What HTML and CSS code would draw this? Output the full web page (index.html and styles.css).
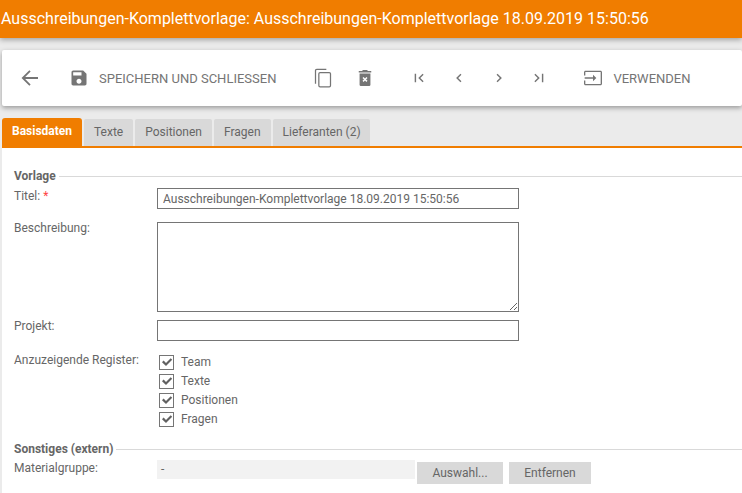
FILE: index.html
```html
<!DOCTYPE html>
<html lang="de">
<head>
<meta charset="utf-8">
<title>Ausschreibungen-Komplettvorlage</title>
<link rel="stylesheet" href="styles.css">
</head>
<body>
<header class="titlebar">Ausschreibungen-Komplettvorlage: Ausschreibungen-Komplettvorlage 18.09.2019 15:50:56</header>
<div class="toolbar">
  <button class="tool back" aria-label="Zurück"><svg viewBox="0 0 24 24" width="24" height="24"><path class="line arrow" d="M20 12H5.500M12 4.800L4.800 12l7.200 7.200"/></svg></button>
  <button class="tool save"><svg viewBox="0 0 24 24" width="20" height="20"><path d="M17 3H5c-1.110 0-2 .9-2 2v14c0 1.100.89 2 2 2h14c1.100 0 2-.9 2-2V7l-4-4zm-5 16c-1.660 0-3-1.340-3-3s1.340-3 3-3 3 1.340 3 3-1.340 3-3 3zm3-10H5V5h10v4z"/></svg><span>SPEICHERN UND SCHLIESSEN</span></button>
  <button class="tool copy" aria-label="Kopieren"><svg viewBox="0 0 24 24" width="20" height="20"><path class="line" d="M3 19V3a1.500 1.500 0 0 1 1.500-1.500H16"/><rect class="line" x="7" y="5.500" width="14" height="17" rx="1.500"/></svg></button>
  <button class="tool trash" aria-label="Löschen"><svg viewBox="0 0 24 24" width="20" height="20"><path d="M9 2.500h6v1h4.500v1.800h-15V3.500H9z"/><path d="M5.500 6.500h13V20a1.500 1.500 0 0 1-1.500 1.500H7A1.500 1.500 0 0 1 5.500 20z"/><path fill="#fff" d="M9 10.500l1.300-1.300 1.700 1.800 1.700-1.800 1.300 1.300-1.800 1.700 1.800 1.700-1.300 1.300-1.700-1.800-1.700 1.800L9 13.900l1.800-1.700z" transform="translate(0 1.500)"/></svg></button>
  <nav class="pager">
    <button class="tool" aria-label="Erste"><svg viewBox="0 0 24 24" width="24" height="24"><path d="M18.410 16.590L13.820 12l4.590-4.590L17 6l-6 6 6 6zM6 6h2v12H6z" transform="translate(12 12) scale(.72) translate(-12 -12)"/></svg></button>
    <button class="tool" aria-label="Zurück"><svg viewBox="0 0 24 24" width="24" height="24"><path d="M15.410 7.410L14 6l-6 6 6 6 1.410-1.410L10.830 12z" transform="translate(12 12) scale(.72) translate(-12 -12)"/></svg></button>
    <button class="tool" aria-label="Weiter"><svg viewBox="0 0 24 24" width="24" height="24"><path d="M10 6L8.590 7.410 13.170 12l-4.580 4.590L10 18l6-6z" transform="translate(12 12) scale(.72) translate(-12 -12)"/></svg></button>
    <button class="tool" aria-label="Letzte"><svg viewBox="0 0 24 24" width="24" height="24"><path d="M5.590 7.410L10.180 12l-4.590 4.590L7 18l6-6-6-6zM16 6h2v12h-2z" transform="translate(12 12) scale(.72) translate(-12 -12)"/></svg></button>
  </nav>
  <button class="tool use"><svg viewBox="0 0 24 24" width="20" height="20"><path d="M21 3.200H3c-1 0-1.800.8-1.800 1.800v4h1.600V4.800h18.400v14.400H2.800V15H1.200v4c0 1 .8 1.800 1.800 1.800h18c1 0 1.800-.8 1.800-1.800V5c0-1-.8-1.800-1.800-1.800zM12 16l4-4-4-4v3.200H2v1.600h10z"/></svg><span>VERWENDEN</span></button>
</div>
<div class="tabs">
  <div class="tab active">Basisdaten</div>
  <div class="tab">Texte</div>
  <div class="tab">Positionen</div>
  <div class="tab">Fragen</div>
  <div class="tab">Lieferanten (2)</div>
</div>
<main class="panel">
  <div class="section"><span>Vorlage</span></div>
  <div class="row row-title">
    <label>Titel: <em>*</em></label>
    <input class="field" type="text" value="Ausschreibungen-Komplettvorlage 18.09.2019 15:50:56">
  </div>
  <div class="row row-desc">
    <label>Beschreibung:</label>
    <textarea class="field area"></textarea>
  </div>
  <div class="row row-proj">
    <label>Projekt:</label>
    <input class="field" type="text">
  </div>
  <div class="row row-reg">
    <label>Anzuzeigende Register:</label>
    <div class="checks">
      <div class="check"><span class="box"><svg viewBox="0 0 14 14" width="14" height="14"><path d="M2 7.200l1.600-1.600L6 8l4.700-4.700 1.500 1.500L6 11z"/></svg></span>Team</div>
      <div class="check"><span class="box"><svg viewBox="0 0 14 14" width="14" height="14"><path d="M2 7.200l1.600-1.600L6 8l4.700-4.700 1.500 1.500L6 11z"/></svg></span>Texte</div>
      <div class="check"><span class="box"><svg viewBox="0 0 14 14" width="14" height="14"><path d="M2 7.200l1.600-1.600L6 8l4.700-4.700 1.500 1.500L6 11z"/></svg></span>Positionen</div>
      <div class="check"><span class="box"><svg viewBox="0 0 14 14" width="14" height="14"><path d="M2 7.200l1.600-1.600L6 8l4.700-4.700 1.500 1.500L6 11z"/></svg></span>Fragen</div>
    </div>
  </div>
  <div class="section section-ext"><span>Sonstiges (extern)</span></div>
  <div class="row row-mat">
    <label>Materialgruppe:</label>
    <div class="readonly">-</div>
    <button class="btn btn-pick">Auswahl...</button>
    <button class="btn">Entfernen</button>
  </div>
</main>
</body>
</html>
```
FILE: styles.css
```css
* { box-sizing: border-box; }
html, body { margin: 0; height: 100%; overflow: hidden; }
body {
  background: #ebebeb;
  font-family: Roboto, "Liberation Sans", sans-serif;
  font-size: 12px;
  color: #666;
}
.titlebar {
  height: 38px;
  background: #f07d00;
  color: #fff;
  font-size: 16px;
  font-weight: 400;
  line-height: 37px;
  padding-left: 1px;
  white-space: nowrap;
  box-shadow: 0 2px 5px rgba(0,0,0,.3);
}
.toolbar {
  height: 56px;
  margin: 12px 0 0 2px;
  background: #fff;
  border-radius: 2px;
  display: flex;
  align-items: center;
  box-shadow: 0 2px 5px rgba(0,0,0,.35);
}
.tool {
  border: 0;
  background: none;
  padding: 0;
  display: flex;
  align-items: center;
  font: inherit;
  font-size: 13px;
  color: #757575;
}
.tool svg { display: block; fill: #757575; }
.tool svg .line { fill: none; stroke: #757575; stroke-width: 1.500; }
.tool svg .arrow { stroke-width: 1.800; }
.back { margin-left: 16px; }
.save { margin-left: 27px; }
.save span { margin-left: 10px; }
.copy { margin-left: 37px; }
.trash { margin-left: 22px; }
.pager { display: flex; gap: 16px; margin-left: 32px; }
.use { margin-left: 32px; }
.use span { margin-left: 10px; }
.tabs {
  display: flex;
  gap: 2px;
  margin: 12px 0 0 2px;
  height: 30px;
  border-bottom: 2px solid #f07d00;
  align-items: flex-end;
}
.tab {
  height: 27px;
  padding: 0 10px;
  background: #d9d9d9;
  line-height: 26px;
  border-radius: 2px 2px 0 0;
}
.tab:last-child { padding-right: 9px; }
.tab.active {
  height: 28px;
  background: #f07d00;
  color: #fff;
  font-weight: 700;
  border-radius: 3px 3px 0 0;
}
.panel {
  margin-left: 2px;
  height: 345px;
  background: #fff;
  padding: 20px 0 0 12px;
}
.section {
  display: flex;
  align-items: center;
  height: 16px;
  font-weight: 700;
  gap: 3px;
  margin-top: 0;
}
.section span { white-space: nowrap; }
.section::after {
  content: "";
  flex: 1;
  height: 1px;
  background: #d9d9d9;
}
.row { display: flex; align-items: flex-start; }
.row label { width: 143px; flex: none; line-height: 16px; }
.row em { color: #f44; font-style: normal; }
.field {
  display: block;
  width: 362px;
  height: 21px;
  border: 1px solid #757575;
  border-radius: 0;
  padding: 0 5px;
  font: inherit;
  color: #666;
  background: #fff;
  outline: 0;
  margin: 0;
}
.area { height: 90px; }
.row-title { margin-top: 4px; }
.row-desc { margin-top: 13px; }
.row-desc label { margin-top: -2px; }
.row-proj { margin-top: 8px; }
.row-proj label { margin-top: -2px; }
.row-reg { margin-top: 11px; }
.row-reg label { margin-top: 0; }
.checks { display: flex; flex-direction: column; gap: 3px; padding-left: 2px; padding-top: 2px; }
.check { display: flex; align-items: center; height: 16px; }
.box {
  width: 15px;
  height: 15px;
  border: 1px solid #757575;
  margin-right: 7px;
  display: flex;
  align-items: center;
  justify-content: center;
}
.box svg { fill: #616161; display: block; flex: none; }
.section-ext { margin-top: 14px; }
.row-mat { margin-top: 3px; align-items: flex-start; }
.readonly {
  width: 258px;
  height: 19px;
  background: #f2f2f2;
  line-height: 19px;
  padding-left: 4px;
  flex: none;
}
.btn {
  border: 0;
  height: 22px;
  margin-top: 2px;
  background: #d9d9d9;
  font: inherit;
  color: #666;
  padding: 0;
  width: 82px;
}
.btn-pick { width: 86px; margin-left: 2px; margin-right: 6px; }
```
